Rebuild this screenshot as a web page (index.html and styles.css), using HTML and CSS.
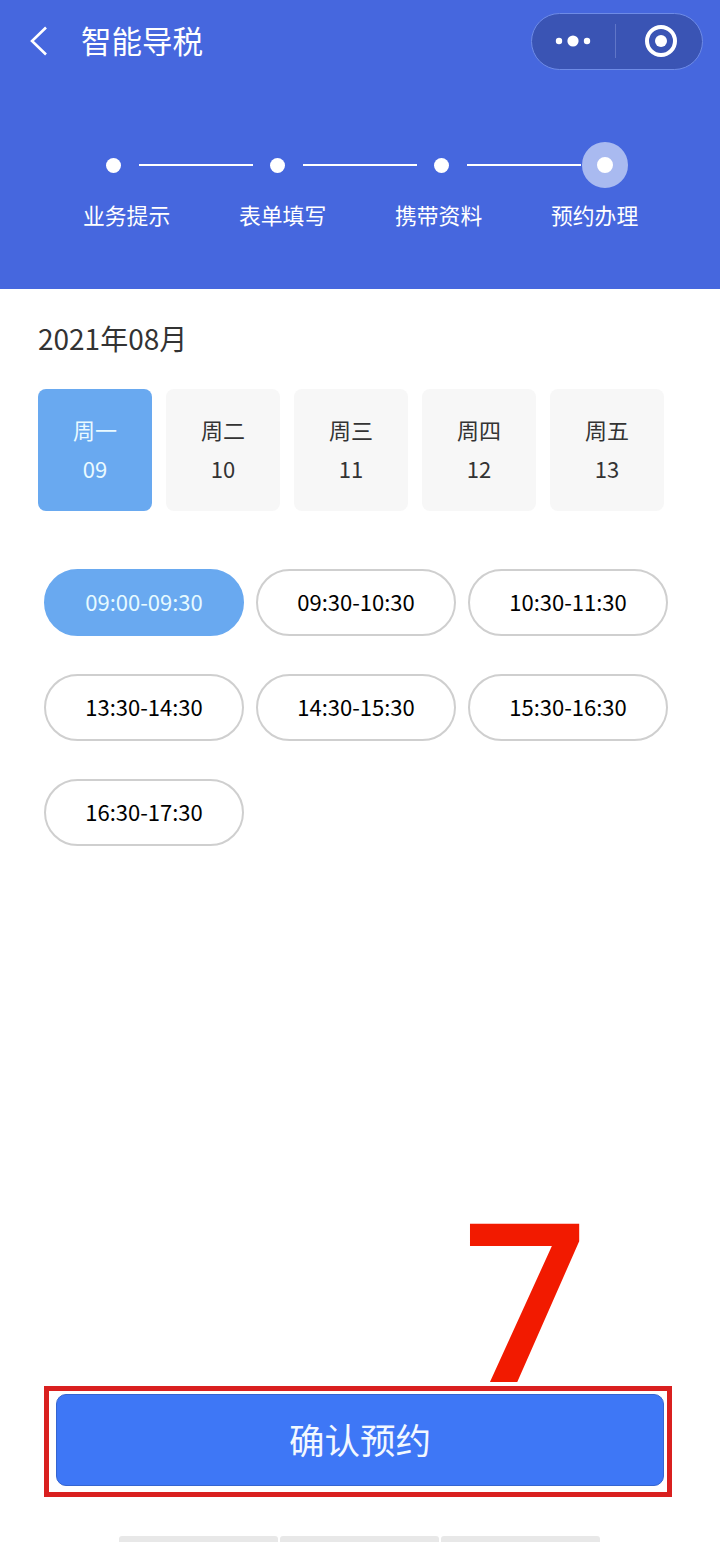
FILE: index.html
```html
<!DOCTYPE html>
<html lang="zh">

<head>
  <meta charset="utf-8">
  <title>智能导税</title>
  <link rel="stylesheet" href="styles.css">
</head>

<body>
  <div class="page">
    <div class="header">
      <div class="nav">
        <svg class="back" width="18" height="30" viewBox="0 0 18 30">
          <path d="M16 1.5 L2 15 L16 28.5" fill="none" stroke="#fff" stroke-width="2.6" />
        </svg>
        <div class="title">智能导税</div>
        <div class="capsule">
          <div class="capsule-part">
            <svg width="38" height="14" viewBox="0 0 38 14">
              <circle cx="5" cy="7" r="3.2" fill="#fff" />
              <circle cx="19" cy="7" r="5.6" fill="#fff" />
              <circle cx="33" cy="7" r="3.2" fill="#fff" />
            </svg>
          </div>
          <div class="capsule-line"></div>
          <div class="capsule-part ring">
            <svg width="34" height="34" viewBox="0 0 34 34">
              <circle cx="17" cy="17" r="14" fill="none" stroke="#fff" stroke-width="4" />
              <circle cx="17" cy="17" r="6" fill="#fff" />
            </svg>
          </div>
        </div>
      </div>

      <div class="steps">
        <span class="dot"></span>
        <span class="line"></span>
        <span class="dot"></span>
        <span class="line"></span>
        <span class="dot"></span>
        <span class="line"></span>
        <span class="dot dot-now"></span>
      </div>
      <div class="labels">
        <span>业务提示</span>
        <span>表单填写</span>
        <span>携带资料</span>
        <span>预约办理</span>
      </div>
    </div>

    <div class="month">2021年08月</div>

    <div class="days">
      <div class="day active"><span>周一</span><span>09</span></div>
      <div class="day"><span>周二</span><span>10</span></div>
      <div class="day"><span>周三</span><span>11</span></div>
      <div class="day"><span>周四</span><span>12</span></div>
      <div class="day"><span>周五</span><span>13</span></div>
    </div>

    <div class="slots">
      <div class="slot active">09:00-09:30</div>
      <div class="slot">09:30-10:30</div>
      <div class="slot">10:30-11:30</div>
      <div class="slot">13:30-14:30</div>
      <div class="slot">14:30-15:30</div>
      <div class="slot">15:30-16:30</div>
      <div class="slot">16:30-17:30</div>
    </div>

    <div class="bottom">
      <div class="mark">7</div>
      <div class="frame">
        <button class="confirm" type="button">确认预约</button>
      </div>
      <div class="grey">
        <span></span>
        <span></span>
        <span></span>
      </div>
    </div>
  </div>
</body>

</html>
```

FILE: styles.css
```css
* {
  box-sizing: border-box;
}

body {
  margin: 0;
  background: #fff;
  font-family: "Noto Sans CJK SC", "Noto Sans", sans-serif;
}

.page {
  display: flex;
  flex-direction: column;
  width: 720px;
  height: 1542px;
  overflow: hidden;
}

/* blue top part */
.header {
  height: 289px;
  padding-top: 12px;
  background: #4667de;
  color: #fff;
}

.nav {
  display: flex;
  align-items: center;
  height: 58px;
  padding: 0 17px 0 30px;
}

.back {
  flex: none;
}

.title {
  margin-top: -2px;
  margin-left: 33px;
  font-size: 30.5px;
  line-height: 58px;
}

.capsule {
  display: flex;
  align-items: center;
  width: 172px;
  height: 57px;
  margin-left: auto;
  border: 1px solid #6e8be6;
  border-radius: 29px;
  background: #3a54b4;
}

.capsule-part {
  display: flex;
  flex: 1;
  align-items: center;
  justify-content: center;
}

.capsule-part.ring {
  padding-left: 4px;
}

.capsule-line {
  width: 1px;
  height: 34px;
  background: #6076c8;
}

.steps {
  display: flex;
  align-items: center;
  height: 46px;
  margin-top: 72px;
  padding-left: 106px;
}

.dot {
  flex: none;
  width: 15px;
  height: 15px;
  margin-right: 18px;
  border-radius: 50%;
  background: #fff;
}

.dot-now {
  width: 46px;
  height: 46px;
  margin-right: 0;
  margin-left: -16px;
  border: 15.5px solid #a9baf0;
}

.line {
  flex: none;
  width: 114px;
  height: 2px;
  margin-right: 17px;
  background: #fff;
}

.labels {
  display: flex;
  margin-top: 11px;
  padding-left: 83px;
  gap: 70px;
  font-size: 21.8px;
  line-height: 32px;
}

.labels span {
  width: 86px;
  white-space: nowrap;
}

/* date picking */
.month {
  margin: 29px 0 0 38px;
  color: #333;
  font-size: 28px;
  line-height: 40px;
}

.days {
  display: flex;
  gap: 14px;
  margin: 31px 0 0 38px;
}

.day {
  display: flex;
  flex-direction: column;
  align-items: center;
  width: 114px;
  height: 122px;
  padding-top: 24px;
  gap: 7px;
  border-radius: 8px;
  background: #f7f7f7;
  color: #333;
  font-size: 22px;
  line-height: 32px;
}

.day.active {
  background: #69a9f0;
  color: #eafaff;
}

.slots {
  display: grid;
  grid-template-columns: repeat(3, 200px);
  gap: 38px 12px;
  margin: 58px 0 0 44px;
}

.slot {
  height: 67px;
  border: 2px solid #cfcfcf;
  border-radius: 34px;
  color: #000;
  font-size: 22px;
  line-height: 60px;
  text-align: center;
}

.slot.active {
  border-color: #69a9f0;
  background: #69a9f0;
  color: #e6faff;
}

/* button at the bottom */
.bottom {
  position: relative;
  margin-top: auto;
}

.mark {
  position: absolute;
  top: -200px;
  left: 462px;
  color: #f21a00;
  font-family: "Open Sans", sans-serif;
  font-size: 221px;
  font-weight: 600;
  line-height: 1;
}

.frame {
  width: 628px;
  height: 111px;
  margin-left: 44px;
  padding: 3px 3px 6px 7px;
  border: 5px solid #d9201f;
}

.confirm {
  display: block;
  width: 608px;
  height: 92px;
  padding: 0 0 4px;
  border: 1px solid #3565d0;
  border-radius: 10px;
  background: #3e77f6;
  color: #f2f8ff;
  font-family: inherit;
  font-size: 35.5px;
}

.grey {
  display: flex;
  gap: 2px;
  height: 6px;
  margin: 39px 0 0 119px;
}

.grey span {
  width: 159px;
  border-radius: 3px 3px 0 0;
  background: #e8e8e8;
}
```
